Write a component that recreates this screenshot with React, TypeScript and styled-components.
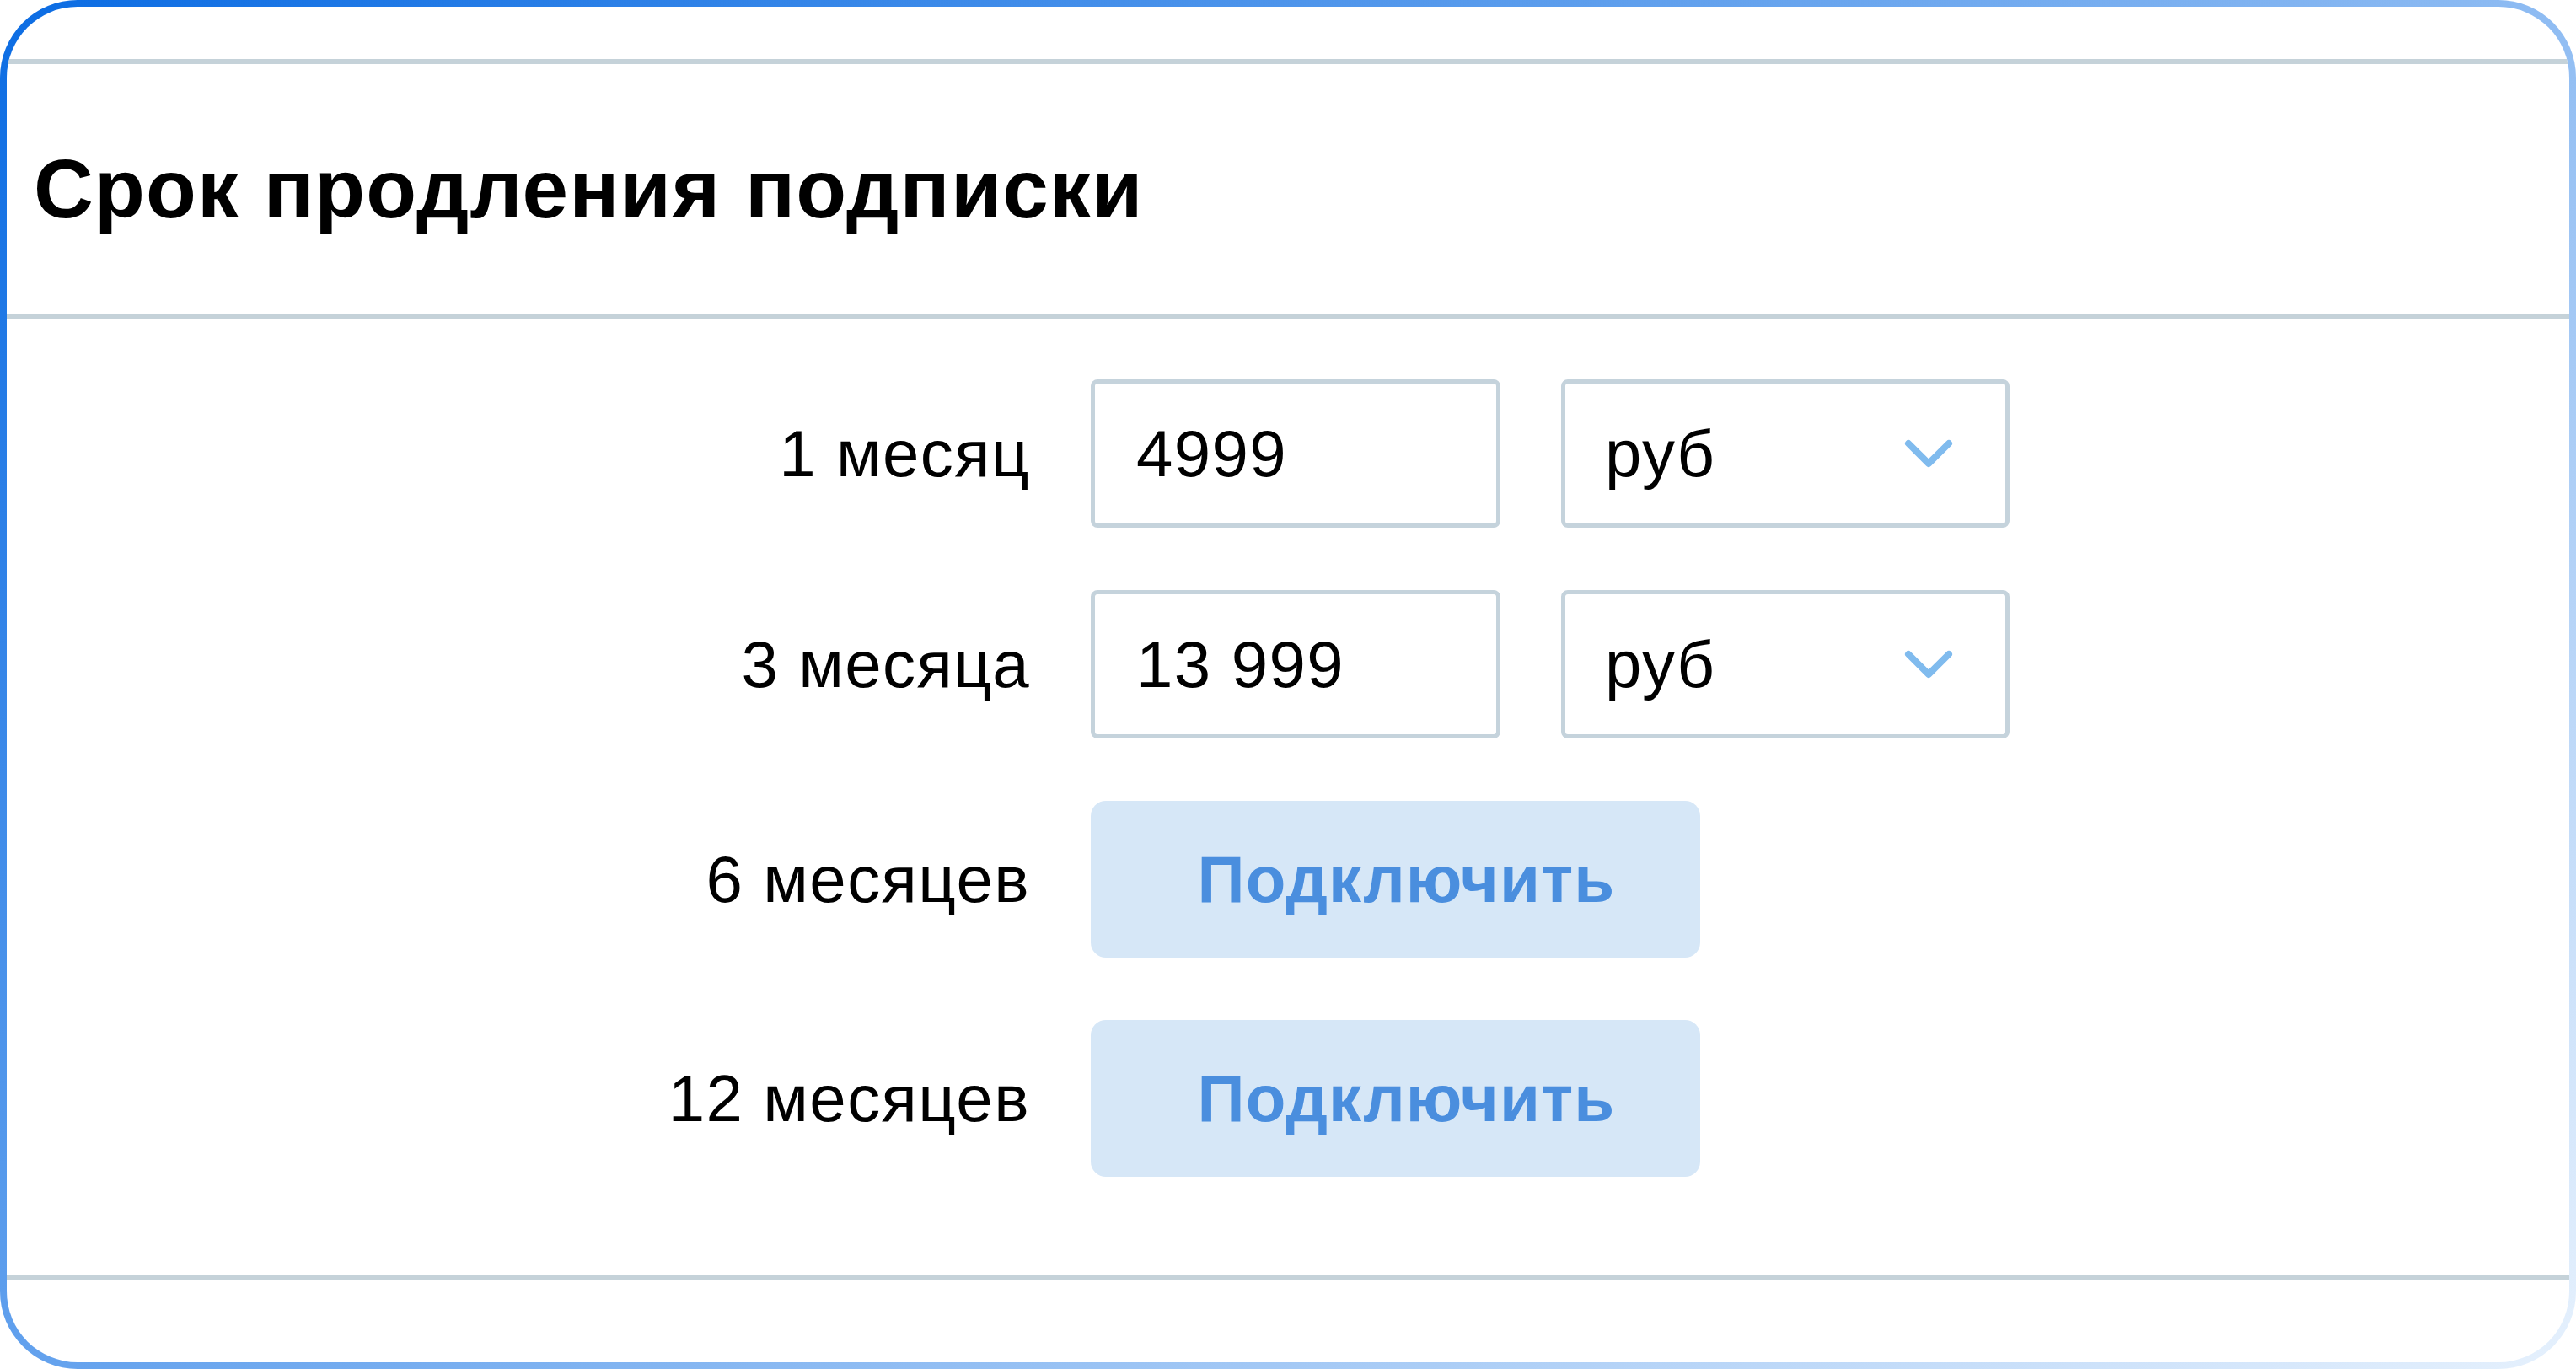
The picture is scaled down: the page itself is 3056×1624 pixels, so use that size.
import React from 'react'
import styled, { createGlobalStyle } from 'styled-components';

const GlobalStyle = createGlobalStyle`
  html, body {
    margin: 0;
    padding: 0;
    background: #ffffff;
  }
  body {
    font-family: "Liberation Sans", Arial, sans-serif;
    color: #000000;
  }
`;

type Price = {
  label: string;
  value?: string;
};

const prices: Price[] = [
  { label: '1 месяц', value: '4999' },
  { label: '3 месяца', value: '13 999' },
  { label: '6 месяцев' },
  { label: '12 месяцев' },
];

function Chevron() {
  return (
    <svg width="58" height="34" viewBox="0 0 58 34" fill="none">
      <path
        d="M5 5 L29 29 L53 5"
        stroke="#80bbee"
        strokeWidth="8"
        strokeLinecap="round"
        strokeLinejoin="round"
      />
    </svg>
  );
}

function App() {
  return (
    <>
      <GlobalStyle />
      <Frame>
        <Card>
          <TopSpace />
          <Divider />
          <Header>
            <Title>Срок продления подписки</Title>
          </Header>
          <Divider />
          <Body>
            {prices.map((item) => (
              <React.Fragment key={item.label}>
                <Label>{item.label}</Label>
                {item.value ? (
                  <>
                    <Field>{item.value}</Field>
                    <Select>
                      <span>руб</span>
                      <Chevron />
                    </Select>
                  </>
                ) : (
                  <ConnectButton>Подключить</ConnectButton>
                )}
              </React.Fragment>
            ))}
          </Body>
          <Divider />
          <BottomSpace />
        </Card>
      </Frame>
    </>
  );
}

const Frame = styled.div`
  width: 3056px;
  height: 1624px;
  box-sizing: border-box;
  padding: 8px;
  border-radius: 92px;
  background: linear-gradient(141deg, #0b6ce3 0%, #e6f1fd 100%);
`;

const Card = styled.div`
  height: 100%;
  background: #ffffff;
  border-radius: 84px;
  overflow: hidden;
  display: flex;
  flex-direction: column;
`;

const TopSpace = styled.div`
  height: 62px;
  flex-shrink: 0;
`;

const BottomSpace = styled.div`
  flex: 1;
`;

const Divider = styled.div`
  height: 6px;
  flex-shrink: 0;
  background: #c5d2d9;
`;

const Header = styled.div`
  height: 296px;
  flex-shrink: 0;
  display: flex;
  align-items: center;
  padding-left: 32px;
`;

const Title = styled.h1`
  margin: 0;
  font-size: 98px;
  font-weight: 700;
  letter-spacing: 1.2px;
  color: #000000;
`;

const Body = styled.div`
  display: grid;
  grid-template-columns: 1214px 486px 532px;
  grid-auto-rows: auto;
  column-gap: 72px;
  row-gap: 74px;
  align-items: center;
  padding: 72px 0 116px;
`;

const Label = styled.div`
  justify-self: end;
  font-size: 78px;
  letter-spacing: 1.4px;
  color: #000000;
`;

const boxBase = `
  box-sizing: border-box;
  height: 176px;
  border: 5px solid #c5d3dc;
  border-radius: 8px;
  background: #ffffff;
  font-size: 78px;
  letter-spacing: 1.4px;
  display: flex;
  align-items: center;
`;

const Field = styled.div`
  ${boxBase}
  padding-left: 49px;
`;

const Select = styled.div`
  ${boxBase}
  justify-content: space-between;
  padding: 0 62px 0 47px;
`;

const ConnectButton = styled.button`
  grid-column: 2 / 4;
  justify-self: start;
  width: 723px;
  height: 186px;
  border: none;
  border-radius: 18px;
  background: #d6e7f7;
  color: #4a8ede;
  font-family: "Liberation Sans", Arial, sans-serif;
  font-size: 78px;
  font-weight: 700;
  letter-spacing: 1.1px;
  padding: 0 0 0 26px;
  cursor: pointer;
`;

export default App;
